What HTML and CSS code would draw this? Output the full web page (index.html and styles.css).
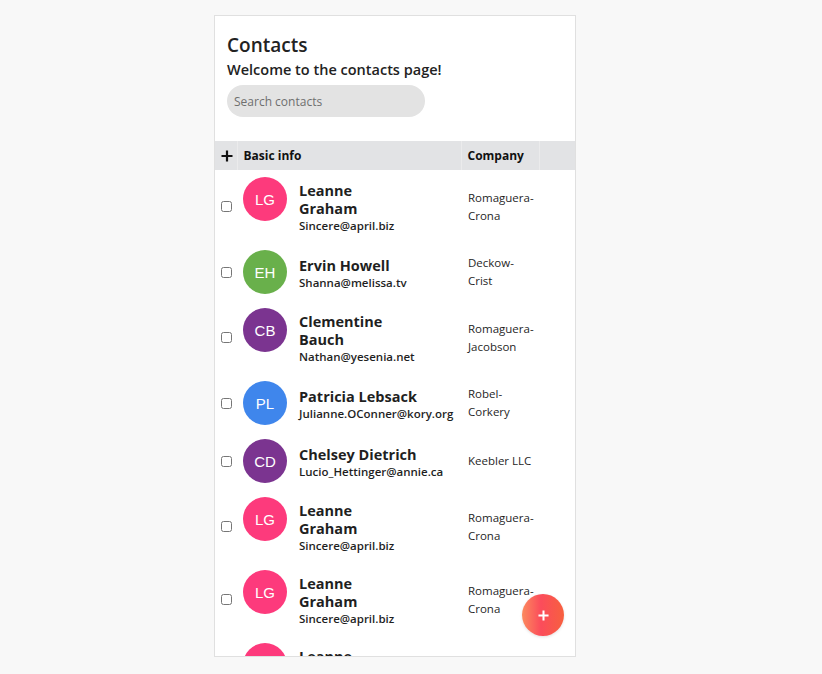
FILE: index.html
```html
<!DOCTYPE html>
<html lang="en">
<head>
<meta charset="utf-8">
<title>Contacts</title>
<link rel="stylesheet" href="styles.css">
</head>
<body>
<div class="card">
  <header class="card-head">
    <h1 class="title">Contacts</h1>
    <h2 class="subtitle">Welcome to the contacts page!</h2>
    <input class="search" type="text" placeholder="Search contacts">
  </header>
  <div class="table-wrap">
    <table class="contacts">
      <colgroup>
        <col class="c-check"><col class="c-info"><col class="c-company"><col class="c-extra">
      </colgroup>
      <thead>
        <tr>
          <th class="th-plus"><svg class="plus" viewBox="0 0 12 12" width="12" height="12"><path d="M6 0.5V11.5M0.5 6H11.5" stroke="#111" stroke-width="2.2" fill="none"/></svg></th>
          <th>Basic info</th>
          <th>Company</th>
          <th></th>
        </tr>
      </thead>
      <tbody>
        <tr>
          <td class="td-check"><input type="checkbox"></td>
          <td class="td-info"><div class="person"><div class="avatar pink">LG</div><div class="info"><div class="name">Leanne Graham</div><div class="email">Sincere@april.biz</div></div></div></td>
          <td class="td-company">Romaguera-Crona</td>
          <td></td>
        </tr>
        <tr>
          <td class="td-check"><input type="checkbox"></td>
          <td class="td-info"><div class="person"><div class="avatar green">EH</div><div class="info"><div class="name">Ervin Howell</div><div class="email">Shanna@melissa.tv</div></div></div></td>
          <td class="td-company">Deckow-Crist</td>
          <td></td>
        </tr>
        <tr>
          <td class="td-check"><input type="checkbox"></td>
          <td class="td-info"><div class="person"><div class="avatar purple">CB</div><div class="info"><div class="name">Clementine Bauch</div><div class="email">Nathan@yesenia.net</div></div></div></td>
          <td class="td-company">Romaguera-Jacobson</td>
          <td></td>
        </tr>
        <tr>
          <td class="td-check"><input type="checkbox"></td>
          <td class="td-info"><div class="person"><div class="avatar blue">PL</div><div class="info"><div class="name">Patricia Lebsack</div><div class="email">Julianne.OConner@kory.org</div></div></div></td>
          <td class="td-company">Robel-Corkery</td>
          <td></td>
        </tr>
        <tr>
          <td class="td-check"><input type="checkbox"></td>
          <td class="td-info"><div class="person"><div class="avatar purple">CD</div><div class="info"><div class="name">Chelsey Dietrich</div><div class="email">Lucio_Hettinger@annie.ca</div></div></div></td>
          <td class="td-company">Keebler LLC</td>
          <td></td>
        </tr>
        <tr>
          <td class="td-check"><input type="checkbox"></td>
          <td class="td-info"><div class="person"><div class="avatar pink">LG</div><div class="info"><div class="name">Leanne Graham</div><div class="email">Sincere@april.biz</div></div></div></td>
          <td class="td-company">Romaguera-Crona</td>
          <td></td>
        </tr>
        <tr>
          <td class="td-check"><input type="checkbox"></td>
          <td class="td-info"><div class="person"><div class="avatar pink">LG</div><div class="info"><div class="name">Leanne Graham</div><div class="email">Sincere@april.biz</div></div></div></td>
          <td class="td-company">Romaguera-Crona</td>
          <td></td>
        </tr>
        <tr>
          <td class="td-check"><input type="checkbox"></td>
          <td class="td-info"><div class="person"><div class="avatar pink">LG</div><div class="info"><div class="name">Leanne Graham</div><div class="email">Sincere@april.biz</div></div></div></td>
          <td class="td-company">Romaguera-Crona</td>
          <td></td>
        </tr>
      </tbody>
    </table>
  </div>
  <button class="fab" type="button"><svg viewBox="0 0 12 12" width="11" height="11"><path d="M6 0.5V11.5M0.5 6H11.5" stroke="#fff" stroke-width="2.2" fill="none"/></svg></button>
</div>
</body>
</html>
```
FILE: styles.css
```css
html, body {
  margin: 0;
  padding: 0;
}
body {
  background: #f8f8f8;
  font-family: "Open Sans", "Noto Sans", sans-serif;
  color: #1f1f1f;
}
.card {
  position: relative;
  box-sizing: border-box;
  width: 362px;
  height: 642px;
  margin: 15px 0 0 214px;
  background: #fff;
  border: 1px solid #e0e0e0;
  overflow: hidden;
  display: flex;
  flex-direction: column;
}
.card-head {
  padding: 17px 12px 24px 12px;
}
.title {
  margin: 0;
  font-size: 19px;
  line-height: 24px;
  font-weight: 600;
  color: #222;
}
.subtitle {
  margin: 3px 0 5px 0;
  font-size: 14.5px;
  line-height: 20px;
  font-weight: 600;
  color: #222;
}
.search {
  display: block;
  box-sizing: border-box;
  width: 198px;
  height: 32px;
  border: none;
  border-radius: 16px;
  background: #e3e3e3;
  padding: 0 7px;
  font-family: inherit;
  font-size: 12px;
  color: #333;
  outline: none;
}
.search::placeholder {
  color: #6f6f6f;
}
.table-wrap {
  flex: 1;
  overflow: hidden;
}
.contacts {
  width: 360px;
  table-layout: fixed;
  border-collapse: collapse;
}
.c-check { width: 22px; }
.c-info { width: 224px; }
.c-company { width: 78px; }
.c-extra { width: 36px; }
.contacts th {
  background: #e2e3e5;
  height: 29px;
  padding: 0 6px;
  text-align: left;
  font-size: 12px;
  font-weight: 700;
  color: #111;
  border-left: 1px solid #ebebec;
}
.contacts th:first-child {
  border-left: none;
  padding: 0 0 0 6px;
}
.plus {
  display: block;
}
.contacts td {
  padding: 0;
  vertical-align: middle;
}
.td-check input {
  margin: 0 0 0 6px;
  width: 11px;
  height: 11px;
  display: block;
}
.td-info {
  padding: 7px 0 7px 6px !important;
}
.person {
  display: flex;
  align-items: center;
  gap: 12px;
}
.avatar {
  align-self: flex-start;
  flex: none;
  width: 44px;
  height: 44px;
  border-radius: 50%;
  color: #fff;
  font-family: "Liberation Sans", Arial, sans-serif;
  font-size: 15px;
  display: flex;
  align-items: center;
  justify-content: center;
}
.pink { background: #fd3a7c; }
.green { background: #69b04b; }
.purple { background: #7b3490; }
.blue { background: #3f86ec; }
.info {
  width: min-content;
  padding: 5px 0 3px 0;
}
.name {
  font-size: 14.5px;
  line-height: 18px;
  font-weight: 700;
  color: #1f1f1f;
}
.email {
  font-size: 11.5px;
  line-height: 15px;
  font-weight: 600;
  color: #1f1f1f;
  white-space: nowrap;
}
.td-company {
  padding: 0 3px 0 7px !important;
  font-size: 11.5px;
  line-height: 18px;
  color: #1f1f1f;
}
.fab {
  position: absolute;
  right: 11px;
  bottom: 20px;
  width: 42px;
  height: 42px;
  border: none;
  border-radius: 50%;
  padding: 0;
  background: linear-gradient(to right, #fb8a5e 0%, #fb4c5b 45%, #f7603f 100%);
  display: flex;
  align-items: center;
  justify-content: center;
  box-shadow: 0 1px 3px rgba(0,0,0,0.12);
}
```
